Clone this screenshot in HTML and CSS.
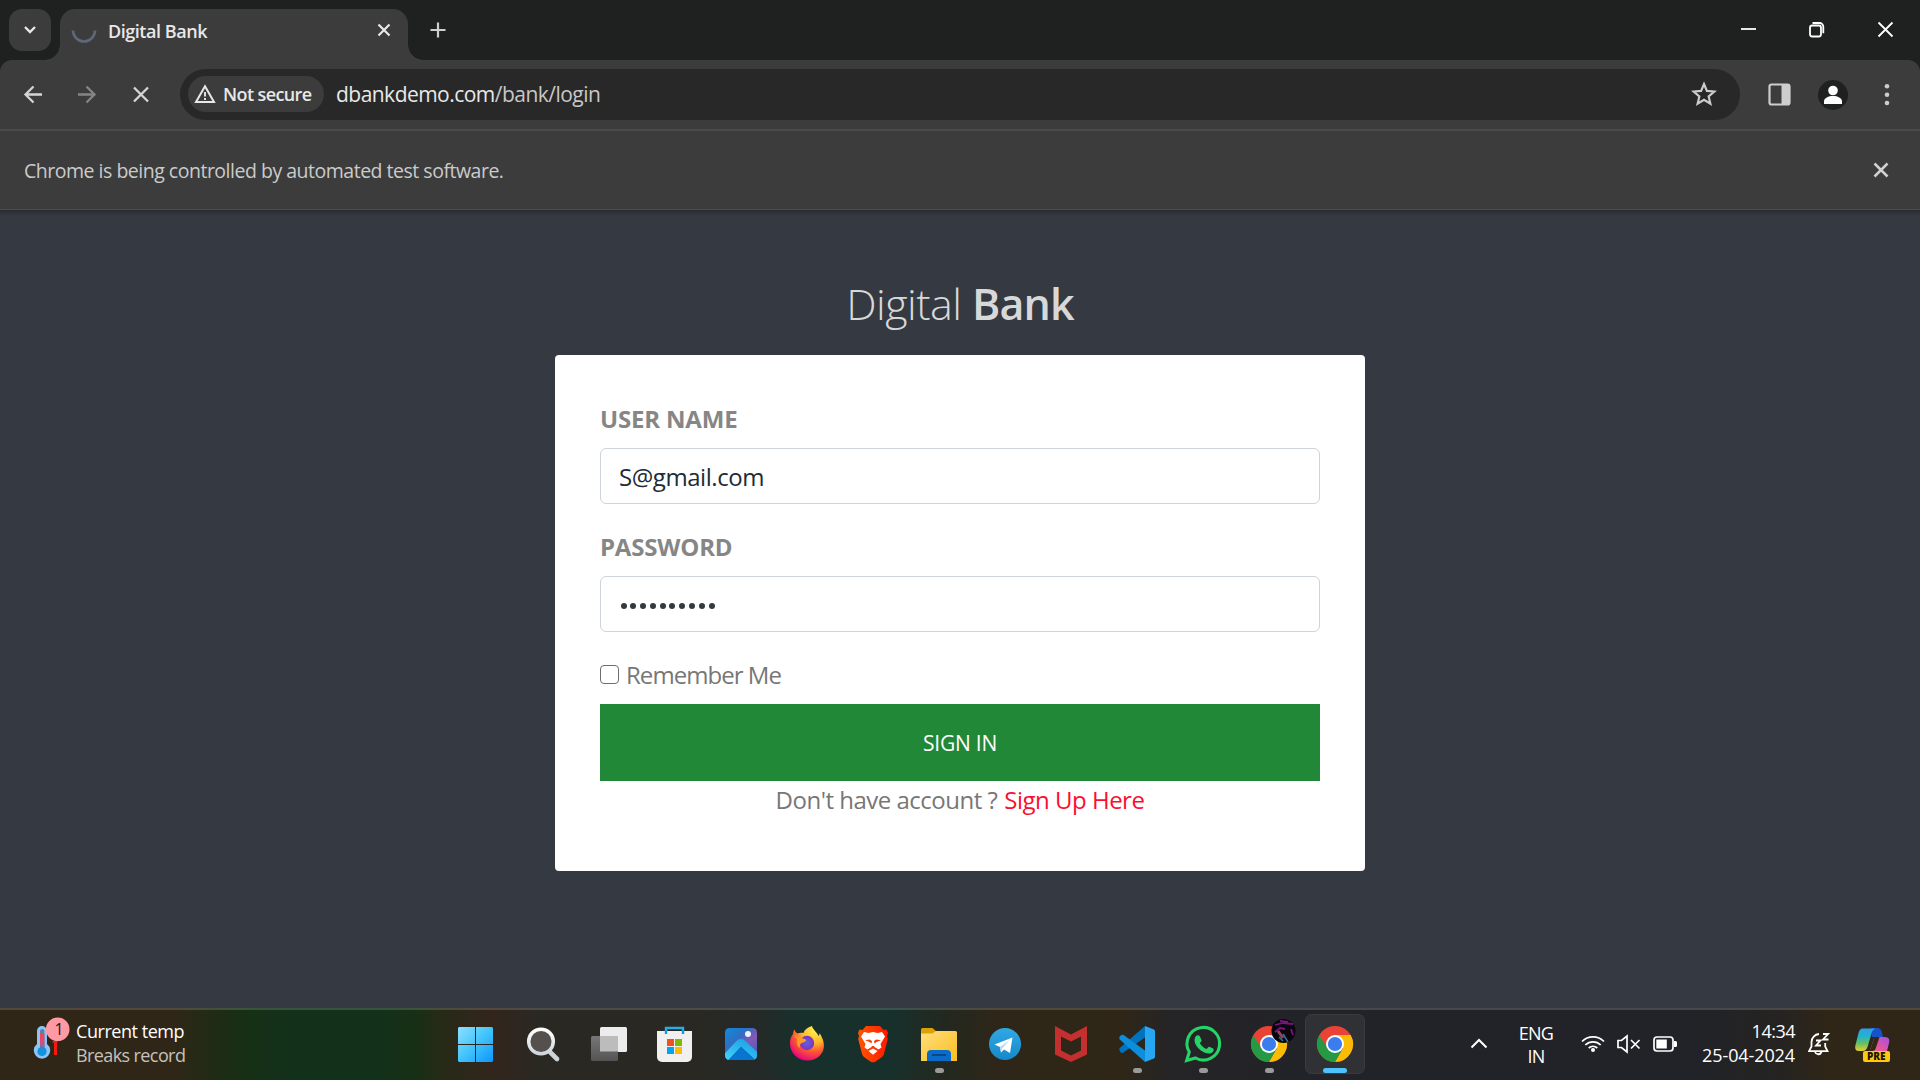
FILE: index.html
```html
<!DOCTYPE html>
<html lang="en">
<head>
<meta charset="utf-8">
<title>Digital Bank</title>
<link rel="stylesheet" href="styles.css">
</head>
<body>
<div class="screen">
  <header class="tabstrip">
    <button class="tab-search" aria-label="Search tabs"><svg width="14" height="10" viewBox="0 0 14 10"><path d="M2 2l5 5 5-5" fill="none" stroke="#e8e8e8" stroke-width="2.4"/></svg></button>
    <div class="tab">
      <svg class="spinner" width="26" height="26" viewBox="0 0 26 26"><path d="M2 12.500a11 11 0 0 0 22 0" fill="none" stroke="#5e6878" stroke-width="2.600"/></svg>
      <span class="tab-title">Digital Bank</span>
      <svg class="tab-close" width="14" height="14" viewBox="0 0 14 14"><path d="M1.500 1.500l11 11M12.500 1.500l-11 11" stroke="#e8e8e8" stroke-width="2.200"/></svg>
    </div>
    <svg class="new-tab" width="16" height="16" viewBox="0 0 16 16"><path d="M8 .5v15M.5 8h15" stroke="#cfcfcf" stroke-width="2.200"/></svg>
    <svg class="window-buttons" width="156" height="60" viewBox="1740 0 156 60" fill="none" stroke="#fff" stroke-width="1.800">
      <path d="M1741 29h15"/>
      <rect x="1810" y="25.500" width="11" height="11" rx="2.200"/>
      <path d="M1812.500 23h7a3.800 3.800 0 0 1 3.800 3.800v6.500"/>
      <path d="M1878.500 22.500l14 14M1892.500 22.500l-14 14"/>
    </svg>
  </header>

  <div class="toolbar">
    <svg class="nav-icons" width="136" height="24" viewBox="20 83 136 24" fill="none" stroke-width="2.300">
      <path d="M42 94.500H26M33.500 86.500L25.500 94.500l8 8" stroke="#d5d5d5"/>
      <path d="M78 94.500h16M86.500 86.500l8 8-8 8" stroke="#858585"/>
      <path d="M134 87.500l14 14M148 87.500l-14 14" stroke="#d5d5d5"/>
    </svg>
    <div class="omnibox">
      <div class="chip">
        <svg width="22" height="20" viewBox="0 0 22 20"><path d="M11 2.200L20 18H2z" fill="none" stroke="#e8e8e8" stroke-width="2"/><path d="M11 8v4.500M11 14v2" stroke="#e8e8e8" stroke-width="1.900"/></svg>
        <span>Not secure</span>
      </div>
      <div class="url">dbankdemo.com<span>/bank/login</span></div>
      <svg class="star" width="26" height="26" viewBox="0 0 24 24"><path d="M12 2.800l2.700 6.300 6.800.6-5.200 4.500 1.600 6.700-5.900-3.600-5.900 3.600 1.600-6.700-5.200-4.500 6.800-.6z" fill="none" stroke="#cccccc" stroke-width="2"/></svg>
    </div>
    <svg class="menu-icons" width="130" height="34" viewBox="1765 78 130 34">
      <rect x="1769.500" y="84.500" width="20" height="20" rx="2" fill="none" stroke="#cdcdcd" stroke-width="2.200"/>
      <path d="M1781.500 84.500h8.500v20h-8.500z" fill="#cdcdcd"/>
      <circle cx="1833" cy="95" r="15" fill="#1f2120"/>
      <circle cx="1833" cy="90.500" r="4.800" fill="#fff"/>
      <path d="M1824 104v-2.500c0-3.600 4.500-5.500 9-5.500s9 1.900 9 5.500v2.500z" fill="#fff"/>
      <g fill="#cdcdcd"><circle cx="1887" cy="86.300" r="2.300"/><circle cx="1887" cy="94.700" r="2.300"/><circle cx="1887" cy="103" r="2.300"/></g>
    </svg>
  </div>

  <div class="infobar">
    <span>Chrome is being controlled by automated test software.</span>
    <svg width="16" height="16" viewBox="0 0 16 16"><path d="M1.500 1.500l13 13M14.500 1.500l-13 13" stroke="#d2d2d2" stroke-width="2.500"/></svg>
  </div>

  <main class="page">
    <h1 class="logo">Digital <b>Bank</b></h1>
    <form class="card">
      <label class="field-label" for="user">USER NAME</label>
      <input class="field" id="user" type="text" value="S@gmail.com">
      <label class="field-label second" for="pass">PASSWORD</label>
      <div class="field dots" id="pass"><i></i><i></i><i></i><i></i><i></i><i></i><i></i><i></i><i></i><i></i></div>
      <label class="remember"><span class="check"></span><span class="remember-text">Remember Me</span></label>
      <button class="sign-in" type="button">SIGN IN</button>
      <p class="signup"><span>Don't have account ?</span><a>Sign Up Here</a></p>
    </form>
  </main>

  <footer class="taskbar">
    <div class="widget">
      <svg width="38" height="50" viewBox="33 1014 38 50">
        <path d="M53 1041h5l-1 2v12h-3v-12l-2-1z" fill="#f5190f"/>
        <path d="M37 1031a5 5 0 0 1 10 0v13a8.200 8.200 0 1 1-10 0z" fill="#8cc4f6"/>
        <rect x="40" y="1029" width="4.400" height="22" rx="2.200" fill="#5f7f9f"/>
        <path d="M40 1034h4.400v16H40z" fill="url(#temp)"/>
        <circle cx="42" cy="1051.500" r="4.600" fill="#1592dd"/>
        <circle cx="57.700" cy="1029.300" r="11.800" fill="#ff99a4"/>
        <text x="54.500" y="1035" class="badge-count">1</text>
        <defs><linearGradient id="temp" x1="0" y1="0" x2="0" y2="1"><stop offset="0" stop-color="#f5405c"/><stop offset=".6" stop-color="#d0507c"/><stop offset="1" stop-color="#1592dd"/></linearGradient></defs>
      </svg>
      <div class="widget-text"><span class="wt1">Current temp</span><span class="wt2">Breaks record</span></div>
    </div>

    <nav class="apps">
      <svg class="app" viewBox="443 1010 66 70"><defs><linearGradient id="win" gradientUnits="userSpaceOnUse" x1="458" y1="1027" x2="493" y2="1062"><stop offset="0" stop-color="#8fe0ff"/><stop offset=".5" stop-color="#42c4fb"/><stop offset="1" stop-color="#0c96fb"/></linearGradient></defs><path d="M459 1027h16v17h-17v-16zM476 1027h16l1 1v16h-17zM458 1045h17v17h-16l-1-1zM476 1045h17v16l-1 1h-16z" fill="url(#win)"/></svg>
      <svg class="app" viewBox="509 1010 66 70"><defs><linearGradient id="lens" x1="0" y1="0" x2="0" y2="1"><stop offset="0" stop-color="#fff"/><stop offset="1" stop-color="#cfd6da"/></linearGradient></defs><path d="M550 1052l7 7" stroke="#cdd3d7" stroke-width="4.600" stroke-linecap="round"/><circle cx="541" cy="1041.500" r="12.300" fill="#55504d" stroke="url(#lens)" stroke-width="3.500"/></svg>
      <svg class="app" viewBox="575 1010 66 70"><defs><linearGradient id="tv" x1="0" y1="0" x2="0" y2="1"><stop offset="0" stop-color="#777"/><stop offset="1" stop-color="#545454"/></linearGradient></defs><rect x="600" y="1027" width="27" height="25" rx="1.500" fill="#ececec"/><rect x="591" y="1036" width="27" height="25" rx="1.500" fill="url(#tv)"/><path d="M600 1036h18v15.500h-18z" fill="#bcbcbc"/></svg>
      <svg class="app" viewBox="641 1010 66 70"><path d="M666 1034v-6h17v6" fill="none" stroke="#27aee9" stroke-width="2.400"/><path d="M657 1031h35v26a5 5 0 0 1-5 5h-25a5 5 0 0 1-5-5z" fill="#f0f0f0"/><path d="M666 1034v-3.500M683 1034v-3.500" stroke="#1599dc" stroke-width="2.400"/><path d="M667 1039h7v7h-7z" fill="#f25022"/><path d="M675 1039h7v7h-7z" fill="#7fba00"/><path d="M667 1047h7v7h-7z" fill="#00a4ef"/><path d="M675 1047h7v7h-7z" fill="#ffb900"/></svg>
      <svg class="app" viewBox="707 1010 66 70"><defs><linearGradient id="sky" x1="0" y1="0" x2="1" y2="1"><stop offset="0" stop-color="#128ade"/><stop offset=".35" stop-color="#2b70c4"/><stop offset=".6" stop-color="#8656b5"/><stop offset="1" stop-color="#2367c3"/></linearGradient><linearGradient id="hill" x1="1" y1="0" x2="0" y2="1"><stop offset="0" stop-color="#1b9fe4"/><stop offset="1" stop-color="#45d5fb"/></linearGradient><clipPath id="photo"><rect x="725" y="1028" width="32" height="32" rx="4.500"/></clipPath></defs><g clip-path="url(#photo)"><path d="M725 1028h32v32h-32z" fill="url(#sky)"/><path d="M741 1043l20 18h-37z" fill="#0872cb"/><path d="M723 1060.500l15.500-16.500q2.500-2.500 5 0l15.500 14.500" fill="none" stroke="url(#hill)" stroke-width="7"/><path d="M741 1048l14 13h-26z" fill="#0876d0"/></g><circle cx="748" cy="1034" r="3" fill="#eef1f8"/></svg>
      <svg class="app" viewBox="773 1010 66 70"><defs><radialGradient id="ff" cx=".72" cy=".12" r=".95"><stop offset="0" stop-color="#fff04a"/><stop offset=".4" stop-color="#ffb52b"/><stop offset=".65" stop-color="#fe592e"/><stop offset="1" stop-color="#e30082"/></radialGradient><radialGradient id="globe"><stop offset="0" stop-color="#5b63e0"/><stop offset="1" stop-color="#8033bd"/></radialGradient></defs><path d="M812 1026c1 4 5 6 6.500 10 1-1 1-2 1-3 4 6 6 13 3 19a17 17 0 0 1-15.500 8.500 17 17 0 0 1-17-17c0-5 1.500-7.500 3-9.500 0-2 .7-3.500 1.700-4.500.3 2 1.300 3 2.800 4 2-.8 4-1 6-.5 1-3.500 5-6 8.500-7z" fill="url(#ff)"/><circle cx="807" cy="1043" r="7.200" fill="url(#globe)"/><path d="M794 1035c3 3 8 2 12.500 5-1 2.500-5 2.500-6 4-1 1-.5 2.500-1 4-3.500-3-3-7-2-9.500-2-.6-3-1.500-3.500-3.500z" fill="#ff9a26"/></svg>
      <svg class="app" viewBox="839 1010 66 70"><defs><linearGradient id="brave" x1="0" x2="1"><stop offset="0" stop-color="#ff5500"/><stop offset="1" stop-color="#ff1a00"/></linearGradient></defs><path d="M866 1026h14l3.500 4 3-.5 1.500 3.500-1 3 .8 3-4 15.500q-.8 2-2.500 3l-6 4.200q-2.300 1-4.600 0l-6-4.200q-1.700-1-2.500-3l-4-15.500.8-3-1-3 1.500-3.500 3 .5z" fill="url(#brave)"/><path d="M864 1032l4.500 1 4.500-1 4.500 1 4.500-1 3 4.500-4.500 7.500 1 3.500-3 2-4-2.500-1-3 3.500-2.200 4-1.500-4.500-.8-2.500 1.500 1 5h-4l1-5-2.500-1.500-4.500.8 4 1.500 3.500 2.200-1 3-4 2.500-3-2 1-3.500-4.500-7.500z" fill="#fff"/><path d="M868.500 1051l4.500-2.500 4.500 2.500-4.500 3.700z" fill="#fff"/></svg>
      <svg class="app" viewBox="905 1010 66 70"><defs><linearGradient id="fold" x1="0" y1="0" x2="1" y2="1"><stop offset="0" stop-color="#ffdf7c"/><stop offset="1" stop-color="#fbbd21"/></linearGradient></defs><path d="M921 1029.500q0-1.500 1.500-1.500h10l4 3.500h5v6h-20.500z" fill="#dca106"/><path d="M921 1033.500h11.500l3.500-2.500h19.500q1.500 0 1.500 1.500v28.500h-36z" fill="url(#fold)"/><path d="M927 1061v-7q0-4 4-4h16q4 0 4 4v7z" fill="#0a6cc8"/><path d="M932 1055h14" stroke="#083f7c" stroke-width="1.600"/><rect x="935" y="1068" width="9" height="5" rx="2.500" fill="#9a9a98"/></svg>
      <svg class="app" viewBox="971 1010 66 70"><defs><linearGradient id="tg" x1="0" y1="0" x2="0" y2="1"><stop offset="0" stop-color="#30a9e4"/><stop offset="1" stop-color="#1688c9"/></linearGradient></defs><circle cx="1005" cy="1044" r="16" fill="url(#tg)"/><path d="M994.500 1044.500l18-7-2.500 15.500-6-3.500-3 3-1-5.500z" fill="#fff"/><path d="M1000 1047l9.500-7-7.500 8.700-1 3.800z" fill="#b9d9ed"/></svg>
      <svg class="app" viewBox="1037 1010 66 70"><path d="M1055 1026l16 8.500 16-8.500v28.500l-16 7.500-16-7.500zM1061 1036.500v14l10 5 10-5v-14l-10 5z" fill="#c3302f" fill-rule="evenodd"/></svg>
      <svg class="app" viewBox="1103 1010 66 70"><path d="M1145 1026v11.500l-22 15.300q-1 .6-2 0l-1.500-2.500q-.7-1.500.5-2.500z" fill="#0073bf"/><path d="M1120 1036l2-1.200q1-.3 2 .5l21 15.200v11.500l-25.500-22.800q-.8-1.500.5-3.200z" fill="#0d8edb"/><path d="M1145 1026l9 3.500q1 .6 1 2v25q0 1.500-1 2l-9 3.500z" fill="#27a6f2"/><rect x="1133" y="1068" width="9" height="5" rx="2.500" fill="#9a9a98"/></svg>
      <svg class="app" viewBox="1169 1010 66 70"><path d="M1186.700 1060.500l2.600-8.500a16.300 16.300 0 1 1 6.200 6z" fill="none" stroke="#25d366" stroke-width="3.100"/><path d="M1196 1036c1-1 3-1.200 3.800.2l1.800 4c.3.800-1.400 2.300-1.700 3 1.400 2.600 3.600 4.500 6.500 5.700.8-.2 2.200-2.500 3-2.200l3.700 1.800c1 .6.500 2.600-.5 3.700-2 1.800-5 1.700-8.300.2-4.500-2-7.600-5.300-9-8.600-1.200-3-.9-6 .7-7.800z" fill="#25d366"/><rect x="1199" y="1068" width="9" height="5" rx="2.500" fill="#9a9a98"/></svg>
      <svg class="app" viewBox="1235 1010 66 70"><g id="chrome"><circle cx="1269" cy="1044" r="18" fill="#ea4335"/><path d="M1269 1035h15.600a18 18 0 0 1-15.600 27l7.800-13.500z" fill="#fbbc05"/><path d="M1253.400 1035a18 18 0 0 0 15.600 27l7.800-13.500h-15.600z" fill="#249a45"/><circle cx="1269" cy="1044" r="9" fill="#fff"/><circle cx="1269" cy="1044" r="7.100" fill="#3b7ded"/></g><circle cx="1283.500" cy="1031" r="12" fill="#09060d"/><path d="M1275 1025l8-2 10 1M1280 1021l8 1M1291 1029l2 6M1275 1032l5-4 5 1" stroke="#7c127f" stroke-width="1.800" fill="none"/><path d="M1278 1031l5 7" stroke="#99405c" stroke-width="3"/><path d="M1283 1034l5 8M1279 1037l4 4" stroke="#32768b" stroke-width="1.500"/><rect x="1265" y="1068" width="9" height="5" rx="2.500" fill="#9a9a98"/></svg>
      <svg class="app" viewBox="1301 1010 66 70"><rect x="1305.500" y="1014.500" width="59" height="59" rx="6" fill="#303135" stroke="#3a3b3f"/><use href="#chrome" x="66"/><rect x="1323" y="1068" width="24" height="5" rx="2.500" fill="#4cc2ff"/></svg>
    </nav>

    <div class="tray">
      <svg width="18" height="11" viewBox="0 0 18 11"><path d="M1.500 9.500L9 2l7.500 7.500" fill="none" stroke="#fff" stroke-width="2"/></svg>
      <div class="lang"><span>ENG</span><span>IN</span></div>
      <svg class="status" width="100" height="24" viewBox="1579 1032 100 24" fill="none" stroke="#fff" stroke-width="1.700">
        <path d="M1582 1041.500a15.500 15.500 0 0 1 22 0M1585.300 1045a11 11 0 0 1 15.400 0M1588.700 1048a6.500 6.500 0 0 1 8.600 0"/><circle cx="1593" cy="1050" r="2" fill="#fff" stroke="none"/>
        <path d="M1618 1040.500h3.500l5.500-4.500v16l-5.500-4.500h-3.500zM1631 1040l8.500 8.500M1639.500 1040l-8.500 8.500"/>
        <rect x="1654" y="1037" width="19" height="14" rx="3"/><path d="M1656.300 1039.500h10.500v9h-10.500z" fill="#fff" stroke="none"/><path d="M1674 1041h1.500q1.500 0 1.500 1.500v3q0 1.500-1.500 1.500h-1.500z" fill="#fff" stroke="none"/>
      </svg>
      <div class="clock"><span class="time">14:34</span><span class="date">25-04-2024</span></div>
      <svg class="bell" width="22" height="24" viewBox="1808 1032 22 24" fill="none" stroke="#fff" stroke-width="1.800"><path d="M1819 1034a8 8 0 0 0-7.500 8v4.500l-2.500 4.700h18.500l-2.300-4.700v-3.500M1815 1052c1.200 3 5.200 3 6.600 0M1816 1040.500h4.500l-4.500 5h5M1823 1034h5l-5 5.500h5.500"/></svg>
      <svg class="copilot" width="36" height="36" viewBox="1855 1027 36 36"><defs><linearGradient id="cp1" x1="0" y1="0" x2="0" y2="1"><stop offset="0" stop-color="#2f9df0"/><stop offset=".35" stop-color="#21b5c8"/><stop offset=".65" stop-color="#65bd69"/><stop offset="1" stop-color="#e7ce29"/></linearGradient><linearGradient id="cp2" x1="1" y1="0" x2="0" y2="1"><stop offset="0" stop-color="#a250e8"/><stop offset=".5" stop-color="#e255a1"/><stop offset="1" stop-color="#ff7a57"/></linearGradient></defs><path d="M1871 1028h6q3.500 0 4.500 3l1.500 6h-11z" fill="#1752c8"/><path d="M1862 1028.500h13q-2.500 1.500-3.500 5l-3.500 12q-1.500 5.500-5.500 5.500h-3.500q-5 0-3.500-6l3-12q1-4 3.500-4.500z" fill="url(#cp1)"/><path d="M1878 1037h7q5.500 0 4 6l-2.500 10h-22q5-.5 6.500-5.500l2.500-8q1-2.500 4.500-2.500z" fill="url(#cp2)"/><path d="M1874.500 1037h5l-4 12q-.7 2-3 2h-4q1.700-1 2.500-3.500z" fill="#332817"/><rect x="1863" y="1051" width="27" height="11" rx="2" fill="#ffc90e"/><text x="1867" y="1060" class="pre">PRE</text></svg>
    </div>
  </footer>
</div>
</body>
</html>
```
FILE: styles.css
```css
* { box-sizing: border-box; }
body { margin: 0; font-family: "Open Sans", "Noto Sans", sans-serif; }
svg { display: block; flex: none; }
button { border: 0; padding: 0; font: inherit; }

.screen { width: 1920px; height: 1080px; display: flex; flex-direction: column; overflow: hidden; background: #1f2120; }

.tabstrip { height: 60px; flex: none; display: flex; align-items: flex-start; padding: 9px 24px 0 9px; color: #e8e8e8; }
.tab-search { width: 42px; height: 42px; border-radius: 13px; background: #3c3c3c; display: grid; place-items: center; }
.tab { position: relative; width: 348px; height: 51px; margin-left: 9px; padding: 0 17px 0 11px; border-radius: 15px 15px 0 0; background: #3c3c3c; display: flex; align-items: center; }
.tab::before, .tab::after { content: ""; position: absolute; bottom: 0; width: 15px; height: 15px; }
.tab::before { right: 100%; background: radial-gradient(circle at 0 0, transparent 14.5px, #3c3c3c 15px); }
.tab::after { left: 100%; background: radial-gradient(circle at 100% 0, transparent 14.5px, #3c3c3c 15px); }
.spinner { margin-bottom: 8px; }
.tab-title { flex: 1; margin: 0 0 7px 11px; font-size: 18px; font-weight: 600; letter-spacing: -.46px; white-space: nowrap; }
.tab-close { margin-bottom: 9px; }
.new-tab { margin: 13px auto 0 22px; }
.window-buttons { margin-top: -9px; }

.toolbar { height: 71px; flex: none; display: flex; align-items: flex-start; padding: 9px 25px 0 20px; background: #3c3c3c; border-radius: 12px 12px 0 0; border-bottom: 2px solid #4a4c4c; }
.nav-icons { margin-top: 14px; }
.omnibox { width: 1560px; height: 51px; margin-left: 24px; padding: 0 23px 2px 8px; border-radius: 26px; background: #282828; display: flex; align-items: center; }
.chip { width: 136px; height: 36px; padding-left: 6px; border-radius: 18px; background: #3c3c3c; display: flex; align-items: center; gap: 7px; font-size: 18px; font-weight: 600; letter-spacing: -.6px; color: #e8e8e8; white-space: nowrap; }
.url { flex: 1; margin-left: 12px; font-size: 21px; letter-spacing: -.53px; color: #e8e8e8; white-space: nowrap; }
.url span { color: #c7c7c7; }
.menu-icons { margin: 9px 0 0 auto; }

.infobar { height: 79px; flex: none; display: flex; align-items: center; justify-content: space-between; padding: 0 31px 0 24px; background: #3c3c3c; border-bottom: 1px solid #4a4c4c; font-size: 19.5px; letter-spacing: -.49px; color: #cbcbcb; white-space: nowrap; }

.page { height: 798px; flex: none; background: linear-gradient(#282c31, #353941 6px); display: flex; flex-direction: column; align-items: center; padding-top: 64px; }
.logo { margin: 0 0 21px; height: 60px; line-height: 60px; font-size: 43px; font-weight: 300; letter-spacing: -.55px; color: #d8d8d8; white-space: nowrap; }
.logo b { font-weight: 600; letter-spacing: -.9px; }

.card { width: 810px; height: 516px; padding: 46px 45px 45px; border-radius: 4px; background: #fff; display: flex; flex-direction: column; font-size: 24px; line-height: 36px; color: #777; }
.field-label { height: 36px; margin-bottom: 11px; font-weight: 700; letter-spacing: -.17px; color: #868686; }
.second { margin-top: 25px; letter-spacing: -.2px; }
.field { width: 720px; height: 56px; padding: 0 18px; border: 1px solid #ced4da; border-radius: 6px; background: #fff; font: inherit; letter-spacing: -.44px; color: #212b38; }
.dots { display: flex; align-items: center; gap: 3.800px; padding: 3px 0 0 19.500px; }
.dots i { width: 6px; height: 6px; border-radius: 50%; background: #303a40; }
.remember { height: 36px; margin: 24px 0 12px; display: flex; align-items: center; gap: 7px; letter-spacing: -.95px; }
.remember-text { padding-top: 2px; }
.check { width: 19px; height: 19px; border: 1.500px solid #6e6e6e; border-radius: 4px; }
.sign-in { height: 77px; padding-top: 1px; background: #218838; color: #fff; font-size: 21px; letter-spacing: -.23px; }
.signup { margin: 1px 0 0; display: flex; justify-content: center; gap: 7px; letter-spacing: -.5px; white-space: nowrap; }
.signup a { color: #fb0f30; }

.taskbar { height: 72px; flex: none; display: flex; border-top: 2px solid rgba(255, 255, 255, .17); background: linear-gradient(90deg, #302617 0, #302617 170px, #232a16 205px, #173015 245px, #13301b 290px, #13301b 380px, #173015 415px, #262a17 440px, #32251b 490px, #2a2823 540px, #292823 700px, #242a28 760px, #17302b 800px, #17302b 890px, #23281f 945px, #2e2618 1000px, #2f2617 1120px, #252426 1170px, #222328 1300px, #222328 1700px, #252322 1780px, #2f2617 1830px, #302617 100%) border-box; color: #fff; font-size: 18px; line-height: 24px; white-space: nowrap; }
.widget { width: 443px; display: flex; align-items: flex-start; padding: 4px 0 0 33px; }
.widget-text { display: flex; flex-direction: column; margin: 5px 0 0 5px; }
.wt1 { letter-spacing: -.45px; }
.wt2 { letter-spacing: -.6px; color: #c5c2bd; }
.badge-count { font-size: 16px; fill: #2a1518; }
.apps { display: flex; }
.app { width: 66px; height: 70px; }
.tray { flex: 1; display: flex; align-items: flex-start; padding-left: 103px; }
.tray > svg:first-child { margin-top: 28px; }
.lang { width: 40px; margin: 12px 0 0 28px; display: flex; flex-direction: column; align-items: center; line-height: 23px; letter-spacing: -.7px; }
.status { margin: 22px 0 0 23px; }
.clock { width: 97px; margin: 9px 0 0 19px; display: flex; flex-direction: column; align-items: flex-end; }
.time { letter-spacing: -.5px; }
.date { letter-spacing: -.1px; }
.bell { margin: 22px 0 0 13px; }
.copilot { margin: 17px 0 0 25px; }
.pre { font-size: 10px; font-weight: 800; fill: #1d1700; }
```
